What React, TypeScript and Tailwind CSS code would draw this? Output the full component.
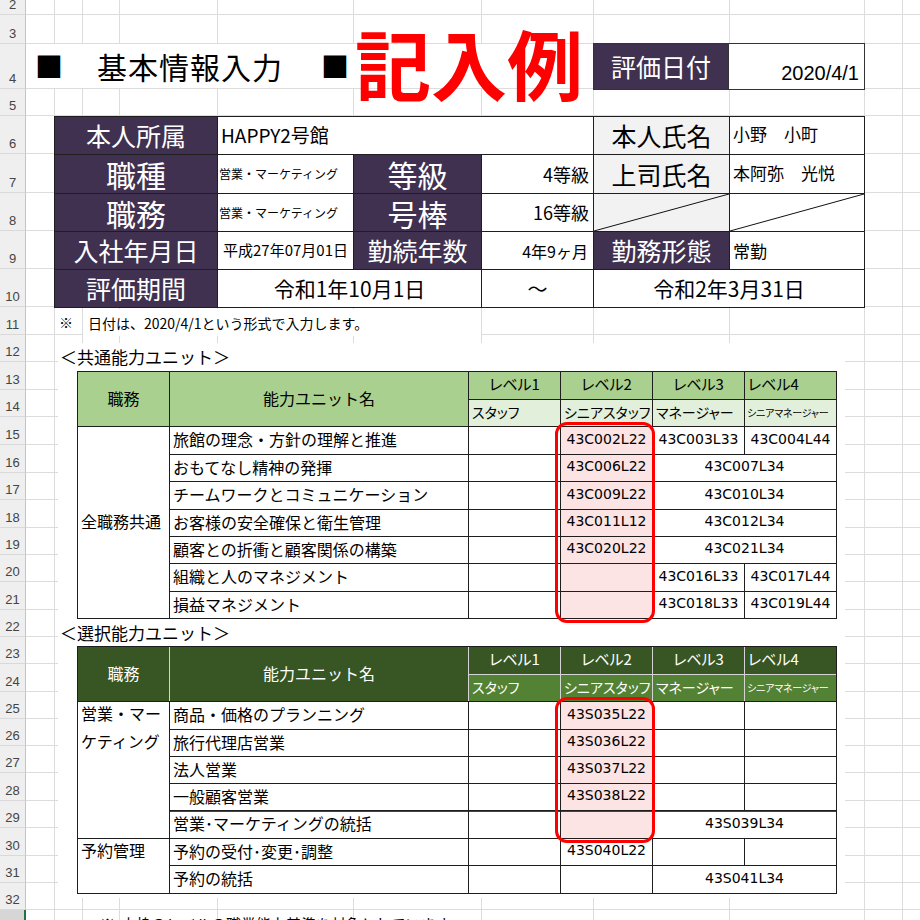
import React from "react";

type GridRow = [number, string];

// sheet rows: number + pixel height (border included)
const gridRows: GridRow[] = [
  [2, "h-[15px]"], [3, "h-[29px]"], [4, "h-[45px]"], [5, "h-[27px]"],
  [6, "h-[38px]"], [7, "h-[39px]"], [8, "h-[38px]"], [9, "h-[38px]"], [10, "h-[38px]"],
  [11, "h-[28px]"], [12, "h-[27px]"], [13, "h-[28px]"], [14, "h-[27px]"], [15, "h-[28px]"],
  [16, "h-[28px]"], [17, "h-[27px]"], [18, "h-[28px]"], [19, "h-[27px]"], [20, "h-[27px]"],
  [21, "h-[28px]"], [22, "h-[27px]"], [23, "h-[27px]"], [24, "h-[28px]"], [25, "h-[27px]"],
  [26, "h-[27px]"], [27, "h-[27px]"], [28, "h-[28px]"], [29, "h-[27px]"], [30, "h-[28px]"],
  [31, "h-[27px]"], [32, "h-[27px]"], [33, "h-[27px]"],
];

const gridCols = [
  "w-[29px]", "w-[28px]", "w-[37px]", "w-[98px]", "w-[136px]", "w-[128px]",
  "w-[112px]", "w-[136px]", "w-[135px]", "w-[38px]",
];

function SheetGrid() {
  return (
    <div className="absolute inset-0 flex flex-col" aria-hidden>
      {gridRows.map(([n, h]) => (
        <div key={n} className={`flex shrink-0 ${h}`}>
          <div
            className={`flex w-[26px] shrink-0 items-end justify-center border-b border-[#d9d9d9] pb-[1px] font-['Liberation_Sans',sans-serif] text-[13px] leading-4 text-[#444] ${
              n === 33 ? "border-r-2 border-r-[#217346] bg-[#d6d6d6]" : "border-r border-r-[#c4c4c4] bg-[#efefef]"
            }`}
          >
            {n}
          </div>
          {gridCols.map((w, i) => (
            <div key={i} className={`${w} shrink-0 border-r border-b border-[#dcdcdc]`} />
          ))}
          <div className="flex-1 border-b border-[#dcdcdc]" />
        </div>
      ))}
    </div>
  );
}

function Label({ children, big }: { children: React.ReactNode; big?: boolean }) {
  return (
    <div
      className={`flex items-center justify-center bg-[#403151] leading-none text-white ${
        big ? "text-[30px]" : "text-[25px]"
      }`}
    >
      {children}
    </div>
  );
}

function GrayLabel({ children }: { children: React.ReactNode }) {
  return (
    <div className="flex items-center justify-center bg-[#f2f2f2] text-[25px] leading-none text-black">
      {children}
    </div>
  );
}

function Diagonal({ gray }: { gray?: boolean }) {
  return (
    <div className={`relative ${gray ? "bg-[#f2f2f2]" : "bg-white"}`}>
      <svg className="absolute inset-0 h-full w-full" viewBox="0 0 100 100" preserveAspectRatio="none">
        <line x1="0" y1="100" x2="100" y2="0" stroke="#111" strokeWidth="1" vectorEffect="non-scaling-stroke" />
      </svg>
    </div>
  );
}

function HeaderTable() {
  return (
    <div className="ml-[54px] grid w-[811px] grid-cols-[162px_135px_127px_111px_135px_134px] grid-rows-[37px_38px_37px_37px_37px] gap-px bg-[#1e1e1e] p-px">
      <Label>本人所属</Label>
      <div className="col-span-3 flex items-center bg-white pl-[3px] text-[19px]">HAPPY2号館</div>
      <GrayLabel>本人氏名</GrayLabel>
      <div className="flex items-center bg-white pb-[3px] pl-[3px] text-[17px]">小野　小町</div>

      <Label big>職種</Label>
      <div className="flex items-center bg-white pl-[1px] text-[12px]">営業・マーケティング</div>
      <Label big>等級</Label>
      <div className="flex items-center justify-end bg-white pr-[4px] text-[18px]">4等級</div>
      <GrayLabel>上司氏名</GrayLabel>
      <div className="flex items-center bg-white pb-[3px] pl-[3px] text-[17px]">本阿弥　光悦</div>

      <Label big>職務</Label>
      <div className="flex items-center bg-white pl-[1px] text-[12px]">営業・マーケティング</div>
      <Label big>号棒</Label>
      <div className="flex items-center justify-end bg-white pr-[4px] text-[18px]">16等級</div>
      <Diagonal gray />
      <Diagonal />

      <Label>入社年月日</Label>
      <div className="flex items-center justify-center bg-white text-[15px]">平成27年07月01日</div>
      <Label>勤続年数</Label>
      <div className="flex items-center justify-end bg-white pr-[5px] text-[16px]">4年9ヶ月</div>
      <Label>勤務形態</Label>
      <div className="flex items-center bg-white pl-[3px] text-[17px]">常勤</div>

      <Label>評価期間</Label>
      <div className="col-span-2 flex items-center justify-center bg-white text-[21px]">令和1年10月1日</div>
      <div className="flex items-center justify-center bg-white text-[20px]">〜</div>
      <div className="col-span-2 flex items-center justify-center bg-white text-[21px]">令和2年3月31日</div>
    </div>
  );
}

type Unit = { name: string; l2?: string; l3?: string; l4?: string; l34?: string; pink?: boolean; thick?: boolean };

const commonUnits: Unit[] = [
  { name: "旅館の理念・方針の理解と推進", l2: "43C002L22", l3: "43C003L33", l4: "43C004L44", pink: true },
  { name: "おもてなし精神の発揮", l2: "43C006L22", l34: "43C007L34", pink: true },
  { name: "チームワークとコミュニケーション", l2: "43C009L22", l34: "43C010L34", pink: true },
  { name: "お客様の安全確保と衛生管理", l2: "43C011L12", l34: "43C012L34", pink: true },
  { name: "顧客との折衝と顧客関係の構築", l2: "43C020L22", l34: "43C021L34", pink: true },
  { name: "組織と人のマネジメント", l3: "43C016L33", l4: "43C017L44", pink: true },
  { name: "損益マネジメント", l3: "43C018L33", l4: "43C019L44", pink: true },
];

const selectUnits: Unit[] = [
  { name: "商品・価格のプランニング", l2: "43S035L22", l3: "", l4: "", pink: true },
  { name: "旅行代理店営業", l2: "43S036L22", l3: "", l4: "", pink: true },
  { name: "法人営業", l2: "43S037L22", l3: "", l4: "", pink: true },
  { name: "一般顧客営業", l2: "43S038L22", l3: "", l4: "", pink: true },
  { name: "営業･マーケティングの統括", l34: "43S039L34", pink: true, thick: true },
  { name: "予約の受付･変更･調整", l2: "43S040L22", l3: "", l4: "" },
  { name: "予約の統括", l34: "43S041L34" },
];

const code = "font-['DejaVu_Sans',sans-serif] text-[14px] pb-[3px]";

function UnitCells({ u }: { u: Unit }) {
  const t = u.thick ? "shadow-[inset_0_1px_0_#444]" : "";
  return (
    <>
      <div className={`flex items-center bg-white pb-[3px] pl-[3px] text-[16px] leading-none ${t}`}>{u.name}</div>
      <div className={`bg-white ${t}`} />
      <div className={`flex items-center justify-center ${u.pink ? "bg-[#fce4e4]" : "bg-white"} ${code} ${t}`}>
        {u.l2}
      </div>
      {u.l34 !== undefined ? (
        <div className={`col-span-2 flex items-center justify-center bg-white ${code} ${t}`}>{u.l34}</div>
      ) : (
        <>
          <div className={`flex items-center justify-center bg-white ${code} ${t}`}>{u.l3}</div>
          <div className={`flex items-center justify-center bg-white ${code} ${t}`}>{u.l4}</div>
        </>
      )}
    </>
  );
}

function TableHeader({ dark }: { dark?: boolean }) {
  const top = dark ? "bg-[#375623] text-white" : "bg-[#a9d08e] text-black";
  const sub = dark ? "bg-[#548235] text-white" : "bg-[#e2efda] text-black";
  return (
    <div
      className={`grid grid-cols-[91px_298px_91px_91px_91px_91px] grid-rows-[27px_26px] gap-px border border-[#1e1e1e] ${
        dark ? "bg-[#d4d4d4]" : "bg-[#1e1e1e]"
      }`}
    >
      <div className={`row-span-2 flex items-center justify-center pb-[3px] text-[16px] ${top}`}>職務</div>
      <div className={`row-span-2 flex items-center justify-center pb-[3px] text-[16px] ${top}`}>能力ユニット名</div>
      <div className={`flex items-center justify-center pb-[2px] text-[15px] [font-feature-settings:'palt'] ${top}`}>レベル1</div>
      <div className={`flex items-center justify-center pb-[2px] text-[15px] [font-feature-settings:'palt'] ${top}`}>レベル2</div>
      <div className={`flex items-center justify-center pb-[2px] text-[15px] [font-feature-settings:'palt'] ${top}`}>レベル3</div>
      <div className={`flex items-center pb-[2px] pl-[3px] text-[15px] [font-feature-settings:'palt'] ${top}`}>レベル4</div>
      <div className={`flex items-center pb-[2px] pl-[3px] text-[14px] [font-feature-settings:'palt'] ${sub}`}>スタッフ</div>
      <div className={`flex items-center pb-[2px] pl-[3px] text-[14px] [font-feature-settings:'palt'] ${sub}`}>シニアスタッフ</div>
      <div className={`flex items-center pb-[2px] pl-[3px] text-[14px] [font-feature-settings:'palt'] ${sub}`}>マネージャー</div>
      <div className={`flex items-center pb-[2px] pl-[2px] text-[10px] tracking-[-0.2px] [font-feature-settings:'palt'] ${sub}`}>
        シニアマネージャー
      </div>
    </div>
  );
}

function RedFrame({ tall }: { tall?: boolean }) {
  return (
    <div
      className={`pointer-events-none absolute left-[478px] top-[51px] w-[100px] rounded-[12px] border-[3px] border-[#ff0000] ${
        tall ? "h-[201px]" : "h-[146px]"
      }`}
    />
  );
}

function CommonTable() {
  return (
    <div className="relative ml-[19px] w-[760px]">
      <TableHeader />
      <div className="grid grid-cols-[91px_298px_91px_91px_91px_91px] grid-rows-[27px_26px_27px_26px_26px_27px_26px] gap-px border-x border-b border-[#1e1e1e] bg-[#1e1e1e]">
        <div className="row-span-7 flex items-center bg-white pb-[3px] pl-[3px] text-[16px]">全職務共通</div>
        {commonUnits.map((u) => (
          <UnitCells key={u.name} u={u} />
        ))}
      </div>
      <RedFrame tall />
    </div>
  );
}

function SelectTable() {
  return (
    <div className="relative ml-[19px] w-[760px]">
      <TableHeader dark />
      <div className="grid grid-cols-[91px_298px_91px_91px_91px_91px] grid-rows-[27px_26px_26px_26px_27px_26px_27px] gap-px border-x border-b border-[#1e1e1e] bg-[#1e1e1e]">
        <div className="row-span-5 bg-white pl-[3px] text-[16px] leading-[28px]">
          <div className="-mt-[3px]">営業・マーケティング</div>
        </div>
        {selectUnits.slice(0, 5).map((u) => (
          <UnitCells key={u.name} u={u} />
        ))}
        <div className="row-span-2 bg-white pl-[3px] text-[16px] leading-[28px]">
          <div className="-mt-[3px]">予約管理</div>
        </div>
        {selectUnits.slice(5).map((u) => (
          <UnitCells key={u.name} u={u} />
        ))}
      </div>
      <RedFrame />
    </div>
  );
}

export default function App() {
  return (
    <div className="relative h-[920px] w-[920px] overflow-hidden bg-white font-['Noto_Sans_CJK_JP','Noto_Sans_CJK_SC',sans-serif] text-black">
      <SheetGrid />
      <div className="relative flex flex-col">
        {/* rows 2-5 */}
        <div className="h-[43px]" />
        <div className="flex h-[47px]">
          <div className="ml-[26px] mt-[1px] flex h-[44px] w-[567px] items-center bg-white">
            <span className="ml-[8px] w-[30px] text-center text-[28px] leading-none">■</span>
            <span className="ml-[33px] text-[30px] leading-none tracking-[1px]">基本情報入力</span>
            <span className="ml-[37px] w-[30px] text-center text-[28px] leading-none">■</span>
            <span className="mb-[9px] ml-[5px] text-[76px] font-bold leading-none text-[#ff0000]">記入例</span>
          </div>
          <div className="flex w-[272px] border border-[#333]">
            <div className="flex w-[135px] items-center justify-center border-r border-[#333] bg-[#403151] text-[25px] leading-none text-white">
              評価日付
            </div>
            <div className="flex flex-1 items-end justify-end bg-white pb-[6px] pr-[5px] font-['Liberation_Sans',sans-serif] text-[20px] leading-none">
              2020/4/1
            </div>
          </div>
        </div>
        <div className="h-[26px]" />

        <HeaderTable />

        {/* row 11 */}
        <div className="flex h-[28px] items-center">
          <span className="ml-[59px] w-[14px] text-[14px]">※</span>
          <div className="ml-[10px] flex h-[27px] w-[398px] items-center bg-white pl-[5px] pt-[2px] text-[14px]">
            日付は、2020/4/1という形式で入力します。
          </div>
        </div>

        <div className="h-[7px]" />
        <div className="ml-[58px] flex h-[555px] w-[787px] flex-col bg-white">
          <div className="flex h-[28px] items-center pl-[2px] text-[17px]">＜共通能力ユニット＞</div>
          <CommonTable />
          <div className="flex h-[27px] items-center pl-[2px] text-[17px]">＜選択能力ユニット＞</div>
          <SelectTable />
        </div>

        <div className="h-[13px]" />
        <div className="flex h-[27px] items-center text-[15px]">
          <span className="ml-[100px]">※</span>
          <span className="ml-[6px]">本枠のレベルの職業能力基準を対象としています。</span>
        </div>
      </div>
    </div>
  );
}
